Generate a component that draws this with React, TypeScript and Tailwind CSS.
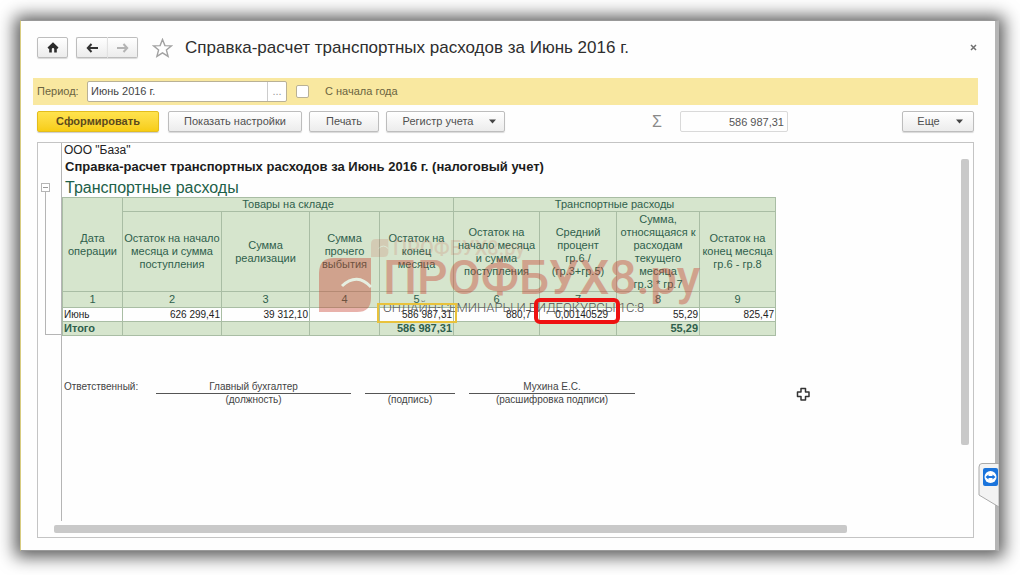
import type { ReactNode } from 'react'

const columns = [
  { id: 2, title: ['Остаток на начало', 'месяца и сумма', 'поступления'], month: '626 299,41', total: '' },
  { id: 3, title: ['Сумма', 'реализации'], month: '39 312,10', total: '' },
  { id: 4, title: ['Сумма', 'прочего', 'выбытия'], month: '', total: '' },
  { id: 5, title: ['Остаток на', 'конец', 'месяца'], month: '586 987,31', total: '586 987,31' },
  { id: 6, title: ['Остаток на', 'начало месяца', 'и сумма', 'поступления'], month: '880,7', total: '' },
  { id: 7, title: ['Средний', 'процент', 'гр.6 /', '(гр.3+гр.5)'], month: '0,00140529', total: '' },
  { id: 8, title: ['Сумма,', 'относящаяся к', 'расходам', 'текущего', 'месяца', 'гр.3 * гр.7'], month: '55,29', total: '55,29' },
  { id: 9, title: ['Остаток на', 'конец месяца', 'гр.6 - гр.8'], month: '825,47', total: '' },
]

const btn =
  'flex h-[21px] items-center justify-center rounded-xs border border-[#bdbdbd] bg-linear-to-b from-white to-[#ececec] text-[11px] text-[#505050] shadow-[0_1px_1px_rgba(0,0,0,0.15)]'

function Caret() {
  return (
    <svg width="7" height="5" viewBox="0 0 7 5" aria-hidden="true">
      <path d="M0 0.5h7L3.5 4.5z" fill="#444" />
    </svg>
  )
}

function Arrow({ color, flip }: { color: string; flip?: boolean }) {
  return (
    <svg width="13" height="10" viewBox="0 0 13 10" aria-hidden="true" className={flip ? 'rotate-180' : ''}>
      <path d="M5.5 1L1.8 5l3.7 4M2 5h10" fill="none" stroke={color} strokeWidth="2" />
    </svg>
  )
}

function Header() {
  return (
    <header className="flex h-[21px] items-center pl-1 pr-px">
      <button className={`${btn} w-[31px]`} aria-label="Начальная страница">
        <svg width="12" height="11" viewBox="0 0 12 11" aria-hidden="true">
          <path d="M6 0.3L0.5 5.6l1.3 1.5 0.4-0.3V10.500h2.600V7q0-1 1.200-1t1.200 1v3.500h2.600V6.800l0.400 0.300 1.300-1.500z" fill="#2b2b2b" />
        </svg>
      </button>
      <div className="ml-2 flex">
        <button className={`${btn} w-[31px] rounded-r-none border-r-0`} aria-label="Назад">
          <Arrow color="#333" />
        </button>
        <button className={`${btn} w-[31px] rounded-l-none border-l-[#e2e2e2]`} aria-label="Вперед">
          <Arrow color="#b4b4b4" flip />
        </button>
      </div>
      <button className="ml-[14px]" aria-label="В избранное">
        <svg width="21" height="20" viewBox="0 0 21 20" aria-hidden="true">
          <path d="M10.5 1.5l2.4 6.1 6.6 0.3-5.1 4.1 1.7 6.4-5.6-3.6-5.6 3.6 1.7-6.4L1.5 7.9l6.6-0.3z" fill="#fff" stroke="#a2a2a2" strokeWidth="1.4" />
        </svg>
      </button>
      <h1 className="ml-3 text-[17px] text-[#2e2e2e]">Справка-расчет транспортных расходов за Июнь 2016 г.</h1>
      <button className="ml-auto" aria-label="Закрыть">
        <svg width="7" height="7" viewBox="0 0 7 7" aria-hidden="true">
          <path d="M1 1l5 5M6 1L1 6" stroke="#707070" strokeWidth="1.5" />
        </svg>
      </button>
    </header>
  )
}

function PeriodBar() {
  return (
    <div className="mt-5 flex h-[27px] items-center bg-[#f9e8a0] pl-1 text-[11px] text-[#6b6440]">
      <label htmlFor="period" className="w-[50px]">Период:</label>
      <div className="flex h-[21px] w-[200px] rounded-xs border border-[#b9b196] bg-white">
        <input id="period" defaultValue="Июнь 2016 г." className="min-w-0 flex-1 px-[3px] text-[#444] outline-none" />
        <button className="w-[19px] border-l border-[#ccc] text-[#999]" aria-label="Выбрать период">...</button>
      </div>
      <input id="from-start" type="checkbox" className="ml-[9px] size-[13px] appearance-none rounded-xs border border-[#b9b196] bg-white" />
      <label htmlFor="from-start" className="ml-4">С начала года</label>
    </div>
  )
}

function Toolbar() {
  return (
    <div className="mt-[6px] flex h-[21px] items-center pl-1 pr-1">
      <button className="h-[21px] w-[122px] rounded-xs border border-[#e3bd1c] bg-linear-to-b from-[#ffe34d] to-[#f7cd12] text-[11px] font-bold text-[#5c4a1c] shadow-[0_1px_1px_rgba(0,0,0,0.2)]">
        Сформировать
      </button>
      <button className={`${btn} ml-[9px] w-[134px]`}>Показать настройки</button>
      <button className={`${btn} ml-[7px] w-[70px]`}>Печать</button>
      <button className={`${btn} ml-[7px] w-[119px] gap-4 pl-2`}>
        Регистр учета
        <Caret />
      </button>
      <label htmlFor="sum" className="ml-[147px] w-7 text-base text-[#8a8a8a]">Σ</label>
      <input id="sum" readOnly value="586 987,31" className="h-[21px] w-[108px] rounded-xs border border-[#d9d9d9] px-[3px] text-right text-[11px] text-[#555]" />
      <button className={`${btn} ml-auto w-[72px] gap-4 pl-1`}>
        Еще
        <Caret />
      </button>
    </div>
  )
}

function Cell({ children, className }: { children?: ReactNode; className?: string }) {
  return <td className={`border-x border-[#a9bda4] px-px text-right ${className ?? ''}`}>{children}</td>
}

function ReportTable() {
  const th = 'border border-[#a9bda4] p-0 font-normal'
  return (
    <table className="w-[714px] table-fixed border-collapse text-[11px] leading-[13px] text-[#2f5f4c]">
      <colgroup>
        <col className="w-[60px]" />
        <col className="w-[99px]" />
        <col className="w-[88px]" />
        <col className="w-[70px]" />
        <col className="w-[74px]" />
        <col className="w-[86px]" />
        <col className="w-[77px]" />
        <col className="w-[83px]" />
        <col className="w-[76px]" />
      </colgroup>
      <thead className="bg-[#d6e5cd]">
        <tr>
          <th rowSpan={2} className={th}>Дата<br />операции</th>
          <th colSpan={4} className={th}>Товары на складе</th>
          <th colSpan={4} className={th}>Транспортные расходы</th>
        </tr>
        <tr className="h-[80px] whitespace-nowrap">
          {columns.map((c) => (
            <th key={c.id} className={th}>
              {c.title.map((line) => <div key={line}>{line}</div>)}
            </th>
          ))}
        </tr>
        <tr className="h-[16px]">
          <th className={th}>1</th>
          {columns.map((c) => <th key={c.id} className={th}>{c.id}</th>)}
        </tr>
      </thead>
      <tbody>
        <tr className="h-[13px] text-[10px] text-[#222]">
          <td className="border-x border-[#a9bda4] px-px">Июнь</td>
          {columns.map((c) => <Cell key={c.id} className={c.id === 6 || c.id === 7 ? 'pr-2' : ''}>{c.month}</Cell>)}
        </tr>
        <tr className="h-[14px] border border-[#a9bda4] bg-[#d6e5cd] font-bold">
          <td className="border-x border-[#a9bda4] px-px">Итого</td>
          {columns.map((c) => <Cell key={c.id}>{c.total}</Cell>)}
        </tr>
      </tbody>
    </table>
  )
}

function Leaf({ size }: { size: number }) {
  return (
    <svg width={size} height={size} viewBox="0 0 54 54" aria-hidden="true">
      <path d="M15 0H52V40Q52 54 38 54H0V15Q0 0 15 0z" fill="#c8402f" />
      <path d="M23 28Q38 14 52 29" fill="none" stroke="#fff" strokeWidth="3" />
    </svg>
  )
}

function Watermark() {
  return (
    <div className="pointer-events-none absolute left-[257px] top-[41px] select-none whitespace-nowrap" aria-hidden="true">
      <div className="flex items-center gap-1 pl-[52px] text-[#c8402f] opacity-15">
        <Leaf size={18} />
        <span className="font-[Roboto] text-[20px] leading-[20px] font-medium">ПРОФБУХ8.ру</span>
      </div>
      <div className="flex h-[54px] gap-[10px] text-[#c8402f] opacity-40">
        <Leaf size={54} />
        <span className="font-[Roboto] text-[48px] leading-[40px] font-medium">ПРОФБУХ8.ру</span>
      </div>
    </div>
  )
}

function Signature({ name, caption, className }: { name?: string; caption: string; className: string }) {
  return (
    <div className={`text-center ${className}`}>
      <div className="h-[13px] border-b border-[#555]">{name}</div>
      <div>{caption}</div>
    </div>
  )
}

function Report() {
  return (
    <section className="relative ml-1 mr-1 mt-[10px] flex flex-1 flex-col border border-[#c4c4c4]">
      <div className="flex flex-1">
        <div className="w-6 border-r border-[#b5b5b5] pl-[3px] pt-[40px]">
          <button className="flex size-[9px] items-center justify-center border border-[#b5b5b5] bg-white" aria-label="Свернуть группу">
            <span className="h-px w-[5px] bg-[#999]" />
          </button>
          <div className="ml-1 h-[143px] border-b border-l border-[#b5b5b5]" />
        </div>
        <div className="min-w-0 flex-1">
          <p className="h-[14px] pl-[2px] text-[12px] leading-[14px] text-[#222]">ООО "База"</p>
          <h2 className="h-[20px] pl-[3px] text-[13px] leading-[20px] font-bold text-[#1c1c1c]">
            Справка-расчет транспортных расходов за Июнь 2016 г. (налоговый учет)
          </h2>
          <h3 className="h-[20px] pl-[3px] text-[16px] leading-[22px] text-[#1d6048]">Транспортные расходы</h3>
          <div className="relative">
            <ReportTable />
            <Watermark />
            <span className="absolute left-[321px] top-[101px] whitespace-nowrap font-[Roboto] text-[13px] font-light text-[#555]" aria-hidden="true">
              ОНЛАЙН-СЕМИНАРЫ И ВИДЕОКУРСЫ 1С:8
            </span>
            <div className="absolute left-[315px] top-[106px] h-[20px] w-[80px] border-2 border-[#e8c23c]" />
            <div className="absolute left-[472px] top-[101px] h-[26px] w-[86px] rounded-md border-4 border-[#ee1111]" />
          </div>
          <div className="mt-[45px] flex pl-[2px] text-[10px] leading-[12px] text-[#444]">
            <span className="w-[92px]">Ответственный:</span>
            <Signature name="Главный бухгалтер" caption="(должность)" className="w-[195px]" />
            <Signature caption="(подпись)" className="ml-[14px] w-[90px]" />
            <Signature name="Мухина Е.С." caption="(расшифровка подписи)" className="ml-[14px] w-[166px]" />
          </div>
        </div>
        <div className="flex w-3 flex-col pb-[76px] pt-4">
          <div className="w-2 flex-1 rounded-xs bg-[#c9c9c9]" />
        </div>
      </div>
      <div className="flex h-4 pl-4 pr-[126px] pt-1">
        <div className="h-2 flex-1 rounded-xs bg-[#c9c9c9]" />
      </div>
      <svg className="absolute left-[758px] top-[244px]" width="15" height="15" viewBox="0 0 15 15" aria-hidden="true">
        <path d="M5 1.5h4.5v3.5h3.5v4.5h-3.5v3.5H5V9.5H1.5V5H5z" fill="#fff" stroke="#333" strokeWidth="1.5" strokeLinejoin="round" />
      </svg>
    </section>
  )
}

export default function App() {
  return (
    <div className="flex min-h-screen bg-white pb-6 pl-5 pr-[21px] pt-5 font-['Liberation_Sans',Arial,sans-serif]">
      <main className="relative flex flex-1 flex-col border-y border-l border-r-4 border-b-[#999] border-l-[#d8cc80] border-r-[#b5b5b5] border-t-[#999] bg-[#fefefe] pb-3 pl-3 pr-[17px] pt-4 shadow-[0_1px_16px_5px_rgba(0,0,0,0.65)]">
        <Header />
        <PeriodBar />
        <Toolbar />
        <Report />
        <a href="#teamviewer" className="absolute -right-1 bottom-[42px]" aria-label="TeamViewer">
          <svg width="21" height="45" viewBox="0 0 21 45" aria-hidden="true">
            <path d="M21 0.5H4Q1 0.5 1 4V32L21 44z" fill="#f3f3f3" stroke="#aaa" />
            <rect x="5" y="5" width="15" height="18" rx="2" fill="#1a74dc" />
            <circle cx="12.5" cy="14" r="6" fill="#fff" />
            <path d="M7.5 14l3-2.5v1.5h4v-1.5l3 2.5-3 2.5v-1.5h-4v1.5z" fill="#1a74dc" />
          </svg>
        </a>
      </main>
    </div>
  )
}
